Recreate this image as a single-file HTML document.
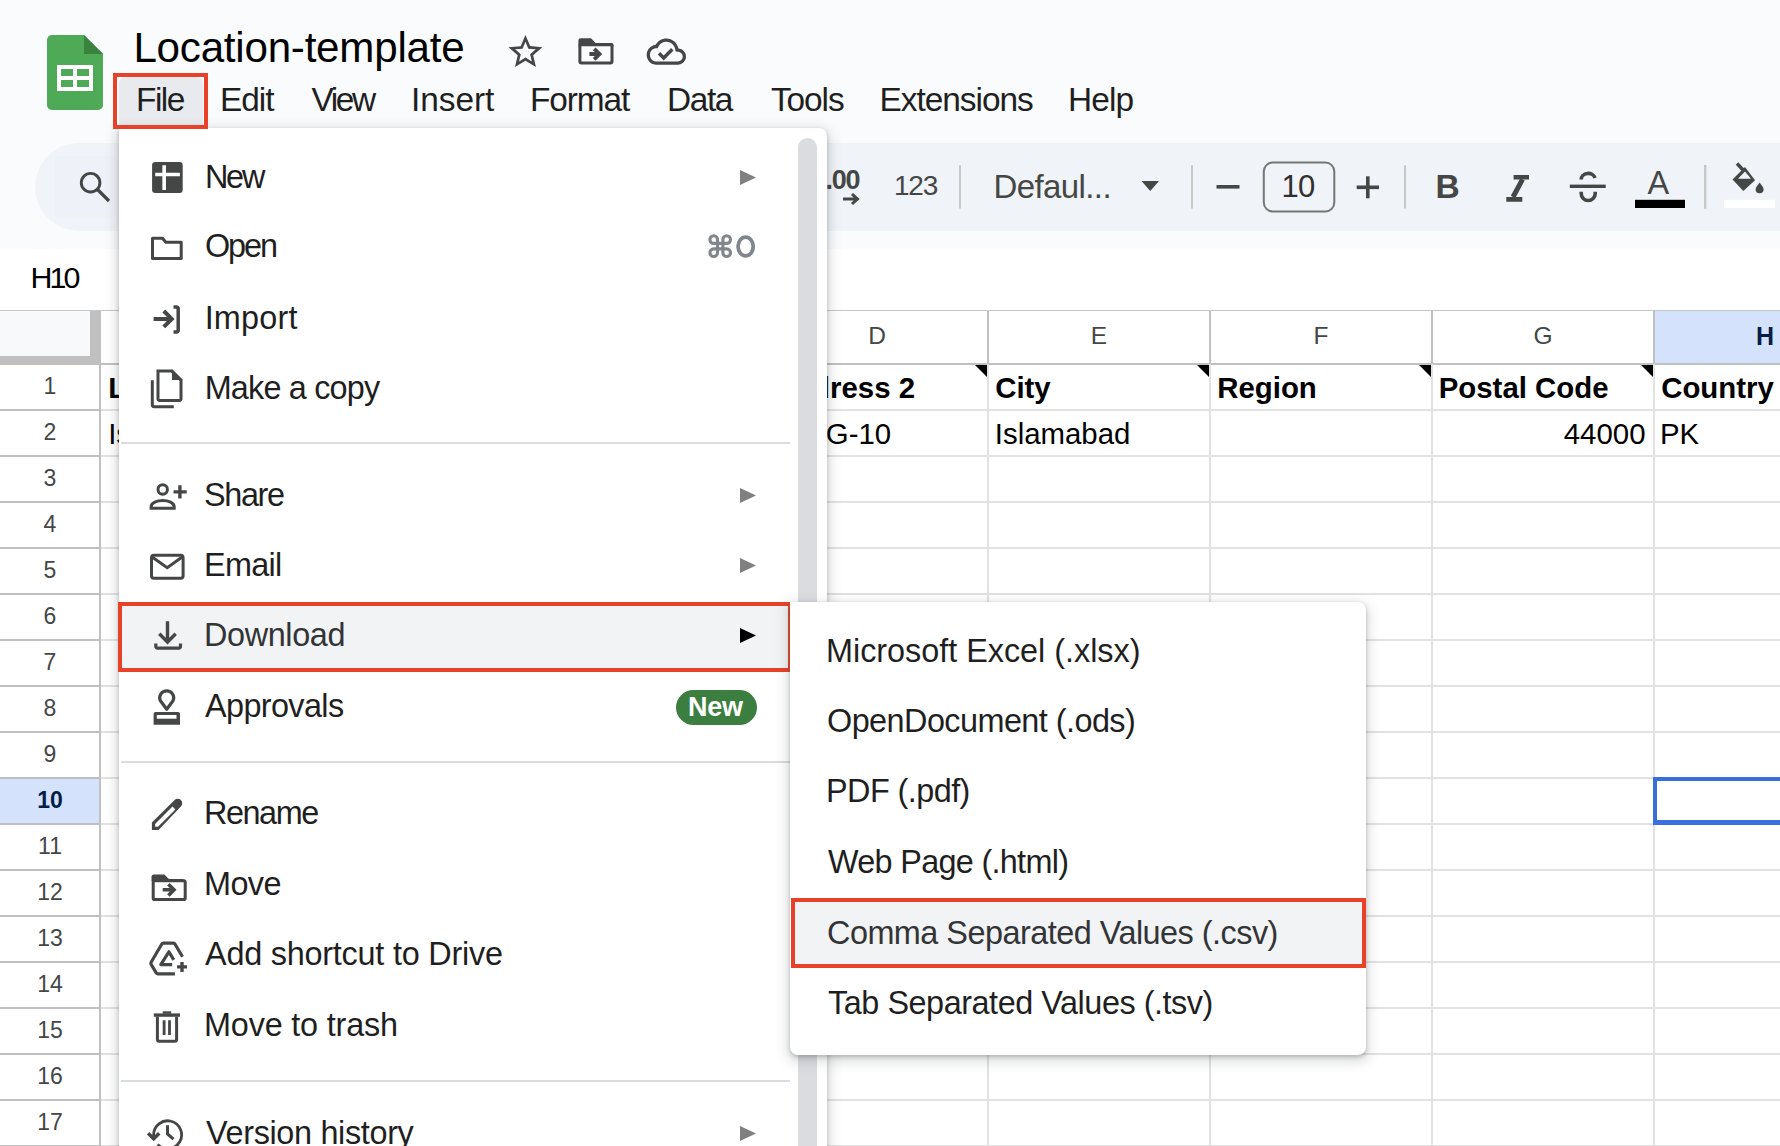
<!DOCTYPE html>
<html><head><meta charset="utf-8"><style>
html,body{margin:0;padding:0;width:1780px;height:1146px;overflow:hidden;background:#fff;position:relative}
body{font-family:"Liberation Sans", sans-serif}
.t{position:absolute;white-space:nowrap;font-family:"Liberation Sans", sans-serif}
svg{overflow:visible}
</style></head><body>
<div style="position:absolute;left:0;top:0;width:1780px;height:249px;background:#f9fbfd"></div>
<svg style="position:absolute;left:47px;top:35px" width="56" height="75" viewBox="0 0 56 75">
<path d="M5 0 H37 L56 19 V70 A5 5 0 0 1 51 75 H5 A5 5 0 0 1 0 70 V5 A5 5 0 0 1 5 0Z" fill="#4eaa57"/>
<path d="M37 0 L56 19 H37Z" fill="#39833f"/>
<rect x="10" y="30" width="36" height="26" fill="#fff"/>
<rect x="14" y="34" width="12" height="7" fill="#4eaa57"/>
<rect x="30" y="34" width="12" height="7" fill="#4eaa57"/>
<rect x="14" y="45" width="12" height="7" fill="#4eaa57"/>
<rect x="30" y="45" width="12" height="7" fill="#4eaa57"/>
</svg>
<div class="t" style="left:133.4px;top:27.07px;font-size:42.15px;line-height:42.15px;color:#000;font-weight:400;letter-spacing:-0.234px;">Location-template</div>
<svg style="position:absolute;left:0;top:0" width="1780" height="120"><path transform="translate(505.1 31.5) scale(1.695)" fill="#444746" d="M22 9.24l-7.19-.62L12 2 9.19 8.63 2 9.24l5.46 4.73L5.82 21 12 17.27 18.18 21l-1.63-7.03L22 9.24zM12 15.4l-3.76 2.27 1-4.28-3.32-2.88 4.38-.38L12 6.1l1.71 4.04 4.38.38-3.32 2.88 1 4.28L12 15.4z"/><path fill="#444746" d="M578.4 40.6a2.3 2.3 0 0 1 2.3-2.3h10.3l4.6 4.7h15.6a2.3 2.3 0 0 1 2.3 2.3v1h-35.1z"/><rect x="579.9" y="44.5" width="32.1" height="18.6" rx="1.5" fill="none" stroke="#444746" stroke-width="3"/><path d="M589.4 54h10.5M594.2 48.8l5.3 5.2-5.3 5.3" fill="none" stroke="#444746" stroke-width="3.8"/><path transform="translate(646.7 31.95) scale(1.6375)" fill="#444746" d="M19.35 10.04C18.67 6.59 15.64 4 12 4 9.11 4 6.6 5.64 5.35 8.04 2.34 8.36 0 10.91 0 14c0 3.31 2.69 6 6 6h13c2.76 0 5-2.24 5-5 0-2.64-2.05-4.78-4.65-4.96zM19 18H6c-2.21 0-4-1.790-4-4 0-2.05 1.53-3.76 3.56-3.97l1.07-.11.5-.95C8.080 7.140 9.940 6 12 6c2.62 0 4.88 1.86 5.39 4.430l.3 1.5 1.53.11c1.56.1 2.78 1.41 2.78 2.96 0 1.65-1.35 3-3 3z"/><path d="M659 53.3l4.7 4.7 8.6-8.7" fill="none" stroke="#444746" stroke-width="3.4"/></svg>
<div style="position:absolute;left:119px;top:77px;width:84px;height:60px;background:#e8eaed;border-radius:6px"></div>
<div class="t" style="left:136px;top:82.90px;font-size:33.43px;line-height:33.43px;color:#1f1f1f;font-weight:400;letter-spacing:-1.489px;">File</div>
<div class="t" style="left:219.9px;top:82.90px;font-size:33.43px;line-height:33.43px;color:#1f1f1f;font-weight:400;letter-spacing:-0.968px;">Edit</div>
<div class="t" style="left:311.5px;top:82.90px;font-size:33.43px;line-height:33.43px;color:#1f1f1f;font-weight:400;letter-spacing:-2.4px;">View</div>
<div class="t" style="left:411px;top:82.90px;font-size:33.43px;line-height:33.43px;color:#1f1f1f;font-weight:400;letter-spacing:-0.06px;">Insert</div>
<div class="t" style="left:530px;top:82.90px;font-size:33.43px;line-height:33.43px;color:#1f1f1f;font-weight:400;letter-spacing:-1.112px;">Format</div>
<div class="t" style="left:667px;top:82.90px;font-size:33.43px;line-height:33.43px;color:#1f1f1f;font-weight:400;letter-spacing:-1.403px;">Data</div>
<div class="t" style="left:771px;top:82.90px;font-size:33.43px;line-height:33.43px;color:#1f1f1f;font-weight:400;letter-spacing:-1.103px;">Tools</div>
<div class="t" style="left:879.6px;top:82.90px;font-size:33.43px;line-height:33.43px;color:#1f1f1f;font-weight:400;letter-spacing:-1.042px;">Extensions</div>
<div class="t" style="left:1068px;top:82.90px;font-size:33.43px;line-height:33.43px;color:#1f1f1f;font-weight:400;letter-spacing:-0.916px;">Help</div>
<div style="position:absolute;left:35px;top:143px;width:1800px;height:88px;background:#f0f3f7;border-radius:44px"></div>
<div style="position:absolute;left:55px;top:156px;width:80px;height:62px;background:#eef2f8"></div>
<svg style="position:absolute;left:0;top:0" width="1780" height="250"><circle cx="90.6" cy="182.7" r="9.3" fill="none" stroke="#444746" stroke-width="2.9"/><path d="M97.5 189.5L109 201" stroke="#444746" stroke-width="3.2"/><path d="M843 199h14M852 194l5.5 5-5.5 5" fill="none" stroke="#444746" stroke-width="3"/><path d="M1141.5 181h17.5l-8.75 10z" fill="#444746"/><rect x="959" y="165.3" width="2" height="43.2" fill="#c7c7c7"/><rect x="1191" y="165.3" width="2" height="43.2" fill="#c7c7c7"/><rect x="1404" y="165.3" width="2" height="43.2" fill="#c7c7c7"/><rect x="1704" y="165" width="2.4" height="43.8" fill="#c7c7c7"/><rect x="1216.5" y="185" width="23" height="3.6" fill="#444746"/><rect x="1356.7" y="185.5" width="22.3" height="3.6" fill="#444746"/><rect x="1366" y="176.3" width="3.6" height="22" fill="#444746"/><rect x="1263.8" y="162.5" width="70.5" height="49" rx="9" fill="none" stroke="#747775" stroke-width="2"/><path d="M1513.6 174.9h15.4v4.5h-15.4z M1506.3 197h16v4.8h-16z" fill="#444746"/><path d="M1522.5 179.4L1513 197" stroke="#444746" stroke-width="5"/><rect x="1569.8" y="184.6" width="35.9" height="3.4" fill="#444746"/><path d="M1581.2 179.5a7 6 0 0 1 13.8-1.5" fill="none" stroke="#444746" stroke-width="3.6"/><path d="M1581.2 191.7v1.8a7 7 0 0 0 14 0v-1.8" fill="none" stroke="#444746" stroke-width="3.6"/><rect x="1635" y="199.8" width="50" height="8.2" fill="#000"/><path d="M1737 163.5l8 8.5" stroke="#444746" stroke-width="3.4"/><path d="M1745 167l10 13.3-11.7 10.7-10.8-11.6z" fill="#444746"/><path d="M1745 171.5l6 7.3h-13z" fill="#f0f3f7"/><path d="M1759.6 182.5c2 2.6 4 5 4 6.8a4 4 0 0 1-8 0c0-1.8 2-4.2 4-6.8z" fill="#444746"/><rect x="1724" y="199.8" width="51" height="8.2" fill="#fff"/></svg>
<div class="t" style="left:825.5px;top:166.84px;font-size:27px;line-height:27px;color:#444746;font-weight:700;letter-spacing:-1.2px;">.00</div>
<div class="t" style="left:894px;top:171.90px;font-size:28px;line-height:28px;color:#444746;font-weight:400;letter-spacing:-1.2px;">123</div>
<div class="t" style="left:993.5px;top:169.57px;font-size:33px;line-height:33px;color:#444746;font-weight:400;letter-spacing:-0.6px;">Defaul...</div>
<div class="t" style="left:1281.5px;top:171.16px;font-size:31px;line-height:31px;color:#303030;font-weight:400;letter-spacing:-0.8px;">10</div>
<div class="t" style="left:1435.5px;top:170.44px;font-size:33.5px;line-height:33.5px;color:#444746;font-weight:700;">B</div>
<div class="t" style="left:1647.5px;top:166.59px;font-size:32.5px;line-height:32.5px;color:#444746;font-weight:400;">A</div>
<div style="position:absolute;left:0;top:249px;width:1780px;height:61px;background:#fff"></div>
<div class="t" style="left:30.5px;top:262.17px;font-size:30.4px;line-height:30.4px;color:#000;font-weight:400;letter-spacing:-2.9px;">H10</div>
<div style="position:absolute;left:0;top:310px;width:1780px;height:1.5px;background:#c4c7c5"></div>
<div style="position:absolute;left:0;top:311px;width:1780px;height:53px;background:#fff"></div>
<div style="position:absolute;left:0;top:311px;width:100px;height:53px;background:#c0c0c0"></div>
<div style="position:absolute;left:0;top:311px;width:90px;height:45px;background:#f8f9fa"></div>
<div style="position:absolute;left:1654px;top:311px;width:126px;height:53px;background:#d5e2fb"></div>
<div style="position:absolute;left:0;top:778px;width:100px;height:46px;background:#d5e2fb"></div>
<div style="position:absolute;left:0;top:363px;width:100px;height:2px;background:#c0c0c0"></div>
<div style="position:absolute;left:100px;top:363px;width:1680px;height:2px;background:#e2e2e2"></div>
<div style="position:absolute;left:0;top:409px;width:100px;height:2px;background:#c0c0c0"></div>
<div style="position:absolute;left:100px;top:409px;width:1680px;height:2px;background:#e2e2e2"></div>
<div style="position:absolute;left:0;top:455px;width:100px;height:2px;background:#c0c0c0"></div>
<div style="position:absolute;left:100px;top:455px;width:1680px;height:2px;background:#e2e2e2"></div>
<div style="position:absolute;left:0;top:501px;width:100px;height:2px;background:#c0c0c0"></div>
<div style="position:absolute;left:100px;top:501px;width:1680px;height:2px;background:#e2e2e2"></div>
<div style="position:absolute;left:0;top:547px;width:100px;height:2px;background:#c0c0c0"></div>
<div style="position:absolute;left:100px;top:547px;width:1680px;height:2px;background:#e2e2e2"></div>
<div style="position:absolute;left:0;top:593px;width:100px;height:2px;background:#c0c0c0"></div>
<div style="position:absolute;left:100px;top:593px;width:1680px;height:2px;background:#e2e2e2"></div>
<div style="position:absolute;left:0;top:639px;width:100px;height:2px;background:#c0c0c0"></div>
<div style="position:absolute;left:100px;top:639px;width:1680px;height:2px;background:#e2e2e2"></div>
<div style="position:absolute;left:0;top:685px;width:100px;height:2px;background:#c0c0c0"></div>
<div style="position:absolute;left:100px;top:685px;width:1680px;height:2px;background:#e2e2e2"></div>
<div style="position:absolute;left:0;top:731px;width:100px;height:2px;background:#c0c0c0"></div>
<div style="position:absolute;left:100px;top:731px;width:1680px;height:2px;background:#e2e2e2"></div>
<div style="position:absolute;left:0;top:777px;width:100px;height:2px;background:#c0c0c0"></div>
<div style="position:absolute;left:100px;top:777px;width:1680px;height:2px;background:#e2e2e2"></div>
<div style="position:absolute;left:0;top:823px;width:100px;height:2px;background:#c0c0c0"></div>
<div style="position:absolute;left:100px;top:823px;width:1680px;height:2px;background:#e2e2e2"></div>
<div style="position:absolute;left:0;top:869px;width:100px;height:2px;background:#c0c0c0"></div>
<div style="position:absolute;left:100px;top:869px;width:1680px;height:2px;background:#e2e2e2"></div>
<div style="position:absolute;left:0;top:915px;width:100px;height:2px;background:#c0c0c0"></div>
<div style="position:absolute;left:100px;top:915px;width:1680px;height:2px;background:#e2e2e2"></div>
<div style="position:absolute;left:0;top:961px;width:100px;height:2px;background:#c0c0c0"></div>
<div style="position:absolute;left:100px;top:961px;width:1680px;height:2px;background:#e2e2e2"></div>
<div style="position:absolute;left:0;top:1007px;width:100px;height:2px;background:#c0c0c0"></div>
<div style="position:absolute;left:100px;top:1007px;width:1680px;height:2px;background:#e2e2e2"></div>
<div style="position:absolute;left:0;top:1053px;width:100px;height:2px;background:#c0c0c0"></div>
<div style="position:absolute;left:100px;top:1053px;width:1680px;height:2px;background:#e2e2e2"></div>
<div style="position:absolute;left:0;top:1099px;width:100px;height:2px;background:#c0c0c0"></div>
<div style="position:absolute;left:100px;top:1099px;width:1680px;height:2px;background:#e2e2e2"></div>
<div style="position:absolute;left:0;top:1145px;width:100px;height:2px;background:#c0c0c0"></div>
<div style="position:absolute;left:100px;top:1145px;width:1680px;height:2px;background:#e2e2e2"></div>
<div style="position:absolute;left:100px;top:362.5px;width:1680px;height:2px;background:#c0c0c0"></div>
<div style="position:absolute;left:99px;top:311px;width:2px;height:835px;background:#c0c0c0"></div>
<div style="position:absolute;left:321px;top:311px;width:2px;height:53px;background:#c0c0c0"></div>
<div style="position:absolute;left:321px;top:364px;width:2px;height:782px;background:#e2e2e2"></div>
<div style="position:absolute;left:543px;top:311px;width:2px;height:53px;background:#c0c0c0"></div>
<div style="position:absolute;left:543px;top:364px;width:2px;height:782px;background:#e2e2e2"></div>
<div style="position:absolute;left:765px;top:311px;width:2px;height:53px;background:#c0c0c0"></div>
<div style="position:absolute;left:765px;top:364px;width:2px;height:782px;background:#e2e2e2"></div>
<div style="position:absolute;left:987px;top:311px;width:2px;height:53px;background:#c0c0c0"></div>
<div style="position:absolute;left:987px;top:364px;width:2px;height:782px;background:#e2e2e2"></div>
<div style="position:absolute;left:1209px;top:311px;width:2px;height:53px;background:#c0c0c0"></div>
<div style="position:absolute;left:1209px;top:364px;width:2px;height:782px;background:#e2e2e2"></div>
<div style="position:absolute;left:1431px;top:311px;width:2px;height:53px;background:#c0c0c0"></div>
<div style="position:absolute;left:1431px;top:364px;width:2px;height:782px;background:#e2e2e2"></div>
<div style="position:absolute;left:1653px;top:311px;width:2px;height:53px;background:#c0c0c0"></div>
<div style="position:absolute;left:1653px;top:364px;width:2px;height:782px;background:#e2e2e2"></div>
<div class="t" style="left:161px;width:100px;text-align:center;top:324.3px;font-size:24.5px;line-height:24.5px;color:#444746">A</div>
<div class="t" style="left:383px;width:100px;text-align:center;top:324.3px;font-size:24.5px;line-height:24.5px;color:#444746">B</div>
<div class="t" style="left:605px;width:100px;text-align:center;top:324.3px;font-size:24.5px;line-height:24.5px;color:#444746">C</div>
<div class="t" style="left:827px;width:100px;text-align:center;top:324.3px;font-size:24.5px;line-height:24.5px;color:#444746">D</div>
<div class="t" style="left:1049px;width:100px;text-align:center;top:324.3px;font-size:24.5px;line-height:24.5px;color:#444746">E</div>
<div class="t" style="left:1271px;width:100px;text-align:center;top:324.3px;font-size:24.5px;line-height:24.5px;color:#444746">F</div>
<div class="t" style="left:1493px;width:100px;text-align:center;top:324.3px;font-size:24.5px;line-height:24.5px;color:#444746">G</div>
<div class="t" style="left:1756px;top:324.04px;font-size:25px;line-height:25px;color:#041e49;font-weight:700;">H</div>
<div class="t" style="left:0;width:100px;text-align:center;top:374.5px;font-size:23px;line-height:23px;color:#444746;font-weight:400">1</div>
<div class="t" style="left:0;width:100px;text-align:center;top:420.5px;font-size:23px;line-height:23px;color:#444746;font-weight:400">2</div>
<div class="t" style="left:0;width:100px;text-align:center;top:466.5px;font-size:23px;line-height:23px;color:#444746;font-weight:400">3</div>
<div class="t" style="left:0;width:100px;text-align:center;top:512.5px;font-size:23px;line-height:23px;color:#444746;font-weight:400">4</div>
<div class="t" style="left:0;width:100px;text-align:center;top:558.5px;font-size:23px;line-height:23px;color:#444746;font-weight:400">5</div>
<div class="t" style="left:0;width:100px;text-align:center;top:604.5px;font-size:23px;line-height:23px;color:#444746;font-weight:400">6</div>
<div class="t" style="left:0;width:100px;text-align:center;top:650.5px;font-size:23px;line-height:23px;color:#444746;font-weight:400">7</div>
<div class="t" style="left:0;width:100px;text-align:center;top:696.5px;font-size:23px;line-height:23px;color:#444746;font-weight:400">8</div>
<div class="t" style="left:0;width:100px;text-align:center;top:742.5px;font-size:23px;line-height:23px;color:#444746;font-weight:400">9</div>
<div class="t" style="left:0;width:100px;text-align:center;top:788.5px;font-size:23px;line-height:23px;color:#041e49;font-weight:700">10</div>
<div class="t" style="left:0;width:100px;text-align:center;top:834.5px;font-size:23px;line-height:23px;color:#444746;font-weight:400">11</div>
<div class="t" style="left:0;width:100px;text-align:center;top:880.5px;font-size:23px;line-height:23px;color:#444746;font-weight:400">12</div>
<div class="t" style="left:0;width:100px;text-align:center;top:926.5px;font-size:23px;line-height:23px;color:#444746;font-weight:400">13</div>
<div class="t" style="left:0;width:100px;text-align:center;top:972.5px;font-size:23px;line-height:23px;color:#444746;font-weight:400">14</div>
<div class="t" style="left:0;width:100px;text-align:center;top:1018.5px;font-size:23px;line-height:23px;color:#444746;font-weight:400">15</div>
<div class="t" style="left:0;width:100px;text-align:center;top:1064.5px;font-size:23px;line-height:23px;color:#444746;font-weight:400">16</div>
<div class="t" style="left:0;width:100px;text-align:center;top:1110.5px;font-size:23px;line-height:23px;color:#444746;font-weight:400">17</div>
<svg style="position:absolute;left:975px;top:365px" width="12" height="12" viewBox="0 0 12 12"><path d="M0 0h12v12z" fill="#000"/></svg>
<svg style="position:absolute;left:1197px;top:365px" width="12" height="12" viewBox="0 0 12 12"><path d="M0 0h12v12z" fill="#000"/></svg>
<svg style="position:absolute;left:1419px;top:365px" width="12" height="12" viewBox="0 0 12 12"><path d="M0 0h12v12z" fill="#000"/></svg>
<svg style="position:absolute;left:1641px;top:365px" width="12" height="12" viewBox="0 0 12 12"><path d="M0 0h12v12z" fill="#000"/></svg>
<div class="t" style="left:108.2px;top:373.41px;font-size:29.4px;line-height:29.4px;color:#000;font-weight:700;">Location Name</div>
<div class="t" style="left:108.2px;top:418.81px;font-size:29.4px;line-height:29.4px;color:#000;font-weight:400;">Islamabad</div>
<div class="t" style="right:865px;top:373.41px;font-size:29.4px;line-height:29.4px;color:#000;font-weight:700;">Address 2</div>
<div class="t" style="left:825.8px;top:418.81px;font-size:29.4px;line-height:29.4px;color:#000;font-weight:400;">G-10</div>
<div class="t" style="left:995.2px;top:373.41px;font-size:29.4px;line-height:29.4px;color:#000;font-weight:700;">City</div>
<div class="t" style="left:994.8px;top:418.81px;font-size:29.4px;line-height:29.4px;color:#000;font-weight:400;">Islamabad</div>
<div class="t" style="left:1217.2px;top:373.41px;font-size:29.4px;line-height:29.4px;color:#000;font-weight:700;">Region</div>
<div class="t" style="left:1438.7px;top:373.41px;font-size:29.4px;line-height:29.4px;color:#000;font-weight:700;">Postal Code</div>
<div class="t" style="right:134.5px;top:418.81px;font-size:29.4px;line-height:29.4px;color:#000;font-weight:400;">44000</div>
<div class="t" style="left:1661.2px;top:373.41px;font-size:29.4px;line-height:29.4px;color:#000;font-weight:700;">Country</div>
<div class="t" style="left:1660px;top:418.81px;font-size:29.4px;line-height:29.4px;color:#000;font-weight:400;">PK</div>
<div style="position:absolute;left:1653px;top:777px;width:200px;height:48px;border:4px solid #386fdc;border-bottom-width:5px;box-sizing:border-box"></div>
<div style="position:absolute;left:119px;top:127.8px;width:708px;height:1100px;background:#fff;border-radius:0 8px 8px 8px;box-shadow:0 4px 12px 4px rgba(60,64,67,0.15), 0 2px 4px rgba(60,64,67,0.3)"></div>
<div style="position:absolute;left:798px;top:138px;width:19px;height:1100px;background:#dadce0;border-radius:10px"></div>
<div style="position:absolute;left:119px;top:602px;width:673px;height:70px;background:#f1f3f4"></div>
<svg style="position:absolute;left:0;top:0" width="1780" height="1146"><g fill="none" stroke="#444746" stroke-width="3">
<rect x="152.1" y="161.9" width="30.6" height="31" rx="3.2" fill="#444746" stroke="none"/>
<path d="M164.15 165.3v24.6M155.2 174.5h24.7" stroke="#fff" stroke-width="3.6"/>
<path d="M152.5 238.2h10l3.3 4h15.4v16.3h-28.7z" stroke-linejoin="round"/>
<path d="M153.6 318.9h17.5M163.8 311l8 7.9-8 8" stroke-width="4"/>
<path d="M173.5 307h2.7a2 2 0 0 1 2 2v21a2 2 0 0 1-2 2h-2.7" stroke-width="3.5"/>
<path d="M158 370.9h13.5l9.5 9.4v18.6a1.5 1.5 0 0 1-1.5 1.5h-20a1.5 1.5 0 0 1-1.5-1.5z" stroke-width="3"/>
<path d="M172 369.4h0.5l10 10v0.5h-10.5z" fill="#444746" stroke="none"/>
<path d="M152.3 380.2v25a1.5 1.5 0 0 0 1.5 1.5h20" stroke-width="3"/>
<circle cx="162.7" cy="489.5" r="4.7" stroke-width="3"/>
<path d="M151.1 508.2v-1.5c0-4 6-6.2 11.6-6.2s11.5 2.2 11.5 6.2v1.5z" stroke-width="3"/>
<path d="M179.9 485.3v13.3M173.5 491.9h13.2" stroke-width="3.4"/>
<rect x="151.5" y="555.2" width="31.6" height="23.1" rx="2.5" stroke-width="3"/>
<path d="M152.5 557.2l14.7 10.4 14.7-10.4" stroke-width="3"/>
<path d="M167.5 621.3v20M159.3 633.8l8.2 8.2 8.2-8.2" stroke-width="3.4"/>
<path d="M155.8 643.5v3a1.6 1.6 0 0 0 1.6 1.6h21.5a1.6 1.6 0 0 0 1.6-1.6v-3" stroke-width="3.2"/>
<path d="M166.7 709.3l-6.5-8.8a7 7 0 1 1 13 0z" stroke-width="3.2" stroke-linejoin="round"/>
<path d="M153.6 724.8v-10.7a2 2 0 0 1 2-2h22.4a2 2 0 0 1 2 2v10.7z" fill="#444746" stroke="none"/>
<rect x="156.8" y="715" width="19.7" height="3.7" fill="#fff" stroke="none"/>
<path d="M151.9 830v-7.5L174.6 800a4.5 4.5 0 0 1 6.3 0a4.5 4.5 0 0 1 0 6.4L158.5 830z" fill="#444746" stroke="none"/>
<path d="M155.1 826.8v-2.9l17.4-17.4l2.9 2.9l-17.4 17.4z" fill="#fff" stroke="none"/>
<path d="M153.2 876v22.2a1.3 1.3 0 0 0 1.3 1.3h29.4a1.3 1.3 0 0 0 1.3-1.3v-16.2a1.3 1.3 0 0 0-1.3-1.3h-30.7" stroke-width="3"/>
<path d="M151.7 876.5a2 2 0 0 1 2-2h10.7l4.5 4.6h14.5v2.2h-31.7z" fill="#444746" stroke="none"/>
<path d="M162.7 889.8h10M168.4 884.2l5.6 5.6-5.6 5.6" stroke-width="3.6"/>
<path d="M182.5 956.7l-7.4-12.5a2 2 0 0 0-1.7-1h-10a2 2 0 0 0-1.7 1l-10.6 18.1a2 2 0 0 0 0 2l5.1 8.6a2 2 0 0 0 1.7 1h17" stroke-width="3.2" stroke-linejoin="round"/>
<path d="M172.2 964.6h-11.4l8.1-12.8 4.9 8" stroke-width="3.2" stroke-linejoin="round"/>
<path d="M182 961.9v10M177 966.9h10" stroke-width="3.4"/>
<path d="M153.8 1015.1h26.2" stroke-width="3.4"/>
<path d="M162.7 1012.5h8.5" stroke-width="2.4"/>
<path d="M157.4 1016.8v22.4a2 2 0 0 0 2 2h15.2a2 2 0 0 0 2-2v-22.4" stroke-width="3"/>
<path d="M164.1 1020.2v14.8M169.5 1020.2v14.8" stroke-width="2.8"/>
<path d="M153.6 1137.5V1135A14 14 0 1 1 157.6 1144.6" stroke-width="2.8"/>
<path d="M146.9 1134.4L149.4 1131.9L153.7 1136.2L158 1131.9L160.5 1134.4L153.7 1141.2z" fill="#444746" stroke="none"/>
<path d="M167.5 1125.2v8.8l6 5.2" stroke-width="3"/>
</g></svg>
<div class="t" style="left:204.9px;top:160.56px;font-size:32.41px;line-height:32.41px;color:#1f1f1f;font-weight:400;letter-spacing:-2.213px;">New</div>
<svg style="position:absolute;left:740px;top:169.5px" width="16" height="15" viewBox="0 0 16 15"><path d="M0 0L16 7.5L0 15z" fill="#808080"/></svg>
<div class="t" style="left:205px;top:230.26px;font-size:32.41px;line-height:32.41px;color:#1f1f1f;font-weight:400;letter-spacing:-2.084px;">Open</div>
<svg style="position:absolute;left:0;top:0" width="1780" height="300"><g fill="none" stroke="#80868b" stroke-width="3.1"><path d="M717.5 252.7V239.6A3.8 3.8 0 1 0 713.7 243.4H726.7A3.8 3.8 0 1 0 722.9 239.6V252.7A3.8 3.8 0 1 0 726.7 248.9H713.7A3.8 3.8 0 1 0 717.5 252.7z"/><ellipse cx="745.65" cy="246.55" rx="7.6" ry="9.4" stroke-width="3.7"/></g></svg>
<div class="t" style="left:204.7px;top:301.66px;font-size:32.41px;line-height:32.41px;color:#1f1f1f;font-weight:400;letter-spacing:0.173px;">Import</div>
<div class="t" style="left:204.7px;top:371.66px;font-size:32.41px;line-height:32.41px;color:#1f1f1f;font-weight:400;letter-spacing:-0.822px;">Make a copy</div>
<div class="t" style="left:204.1px;top:479.06px;font-size:32.41px;line-height:32.41px;color:#1f1f1f;font-weight:400;letter-spacing:-1.388px;">Share</div>
<svg style="position:absolute;left:740px;top:488.0px" width="16" height="15" viewBox="0 0 16 15"><path d="M0 0L16 7.5L0 15z" fill="#808080"/></svg>
<div class="t" style="left:204px;top:549.06px;font-size:32.41px;line-height:32.41px;color:#1f1f1f;font-weight:400;letter-spacing:-0.708px;">Email</div>
<svg style="position:absolute;left:740px;top:558.0px" width="16" height="15" viewBox="0 0 16 15"><path d="M0 0L16 7.5L0 15z" fill="#808080"/></svg>
<div class="t" style="left:204px;top:618.96px;font-size:32.41px;line-height:32.41px;color:#333436;font-weight:400;letter-spacing:-0.385px;">Download</div>
<svg style="position:absolute;left:740px;top:627.9px" width="16" height="15" viewBox="0 0 16 15"><path d="M0 0L16 7.5L0 15z" fill="#000"/></svg>
<div class="t" style="left:205px;top:689.86px;font-size:32.41px;line-height:32.41px;color:#1f1f1f;font-weight:400;letter-spacing:-0.625px;">Approvals</div>
<div style="position:absolute;left:676px;top:690px;width:81px;height:35px;background:#3b7e3f;border-radius:18px"></div>
<div class="t" style="left:688px;top:694.44px;font-size:27px;line-height:27px;color:#fff;font-weight:700;letter-spacing:-0.2px;">New</div>
<div class="t" style="left:203.9px;top:797.36px;font-size:32.41px;line-height:32.41px;color:#1f1f1f;font-weight:400;letter-spacing:-1.413px;">Rename</div>
<div class="t" style="left:204px;top:868.16px;font-size:32.41px;line-height:32.41px;color:#1f1f1f;font-weight:400;letter-spacing:-0.607px;">Move</div>
<div class="t" style="left:205px;top:938.06px;font-size:32.41px;line-height:32.41px;color:#1f1f1f;font-weight:400;letter-spacing:-0.233px;">Add shortcut to Drive</div>
<div class="t" style="left:204px;top:1008.56px;font-size:32.41px;line-height:32.41px;color:#1f1f1f;font-weight:400;letter-spacing:-0.191px;">Move to trash</div>
<div class="t" style="left:206px;top:1116.66px;font-size:32.41px;line-height:32.41px;color:#1f1f1f;font-weight:400;letter-spacing:-0.338px;">Version history</div>
<svg style="position:absolute;left:740px;top:1125.6px" width="16" height="15" viewBox="0 0 16 15"><path d="M0 0L16 7.5L0 15z" fill="#808080"/></svg>
<div style="position:absolute;left:121px;top:442px;width:669px;height:2px;background:#dadce0"></div>
<div style="position:absolute;left:121px;top:761px;width:669px;height:2px;background:#dadce0"></div>
<div style="position:absolute;left:121px;top:1080px;width:669px;height:2px;background:#dadce0"></div>
<div style="position:absolute;left:118px;top:602px;width:666px;height:62px;border:4px solid #e8412a"></div>
<div style="position:absolute;left:790px;top:602px;width:576px;height:453px;background:#fff;border-radius:0 8px 8px 8px;box-shadow:0 4px 12px 4px rgba(60,64,67,0.15), 0 2px 4px rgba(60,64,67,0.3)"></div>
<div style="position:absolute;left:792px;top:898px;width:574px;height:70px;background:#f1f3f4"></div>
<div class="t" style="left:826px;top:635.46px;font-size:32.41px;line-height:32.41px;color:#1f1f1f;font-weight:400;letter-spacing:-0.027px;">Microsoft Excel (.xlsx)</div>
<div class="t" style="left:827px;top:705.16px;font-size:32.41px;line-height:32.41px;color:#1f1f1f;font-weight:400;letter-spacing:-0.557px;">OpenDocument (.ods)</div>
<div class="t" style="left:826px;top:775.46px;font-size:32.41px;line-height:32.41px;color:#1f1f1f;font-weight:400;letter-spacing:-0.562px;">PDF (.pdf)</div>
<div class="t" style="left:828px;top:846.36px;font-size:32.41px;line-height:32.41px;color:#1f1f1f;font-weight:400;letter-spacing:-0.703px;">Web Page (.html)</div>
<div class="t" style="left:827px;top:916.76px;font-size:32.41px;line-height:32.41px;color:#333436;font-weight:400;letter-spacing:-0.517px;">Comma Separated Values (.csv)</div>
<div class="t" style="left:828px;top:986.86px;font-size:32.41px;line-height:32.41px;color:#1f1f1f;font-weight:400;letter-spacing:-0.465px;">Tab Separated Values (.tsv)</div>
<div style="position:absolute;left:791px;top:898px;width:567px;height:62px;border:4px solid #e8412a"></div>
<div style="position:absolute;left:113px;top:73px;width:87px;height:48px;border:4px solid #e8412a"></div>
</body></html>
